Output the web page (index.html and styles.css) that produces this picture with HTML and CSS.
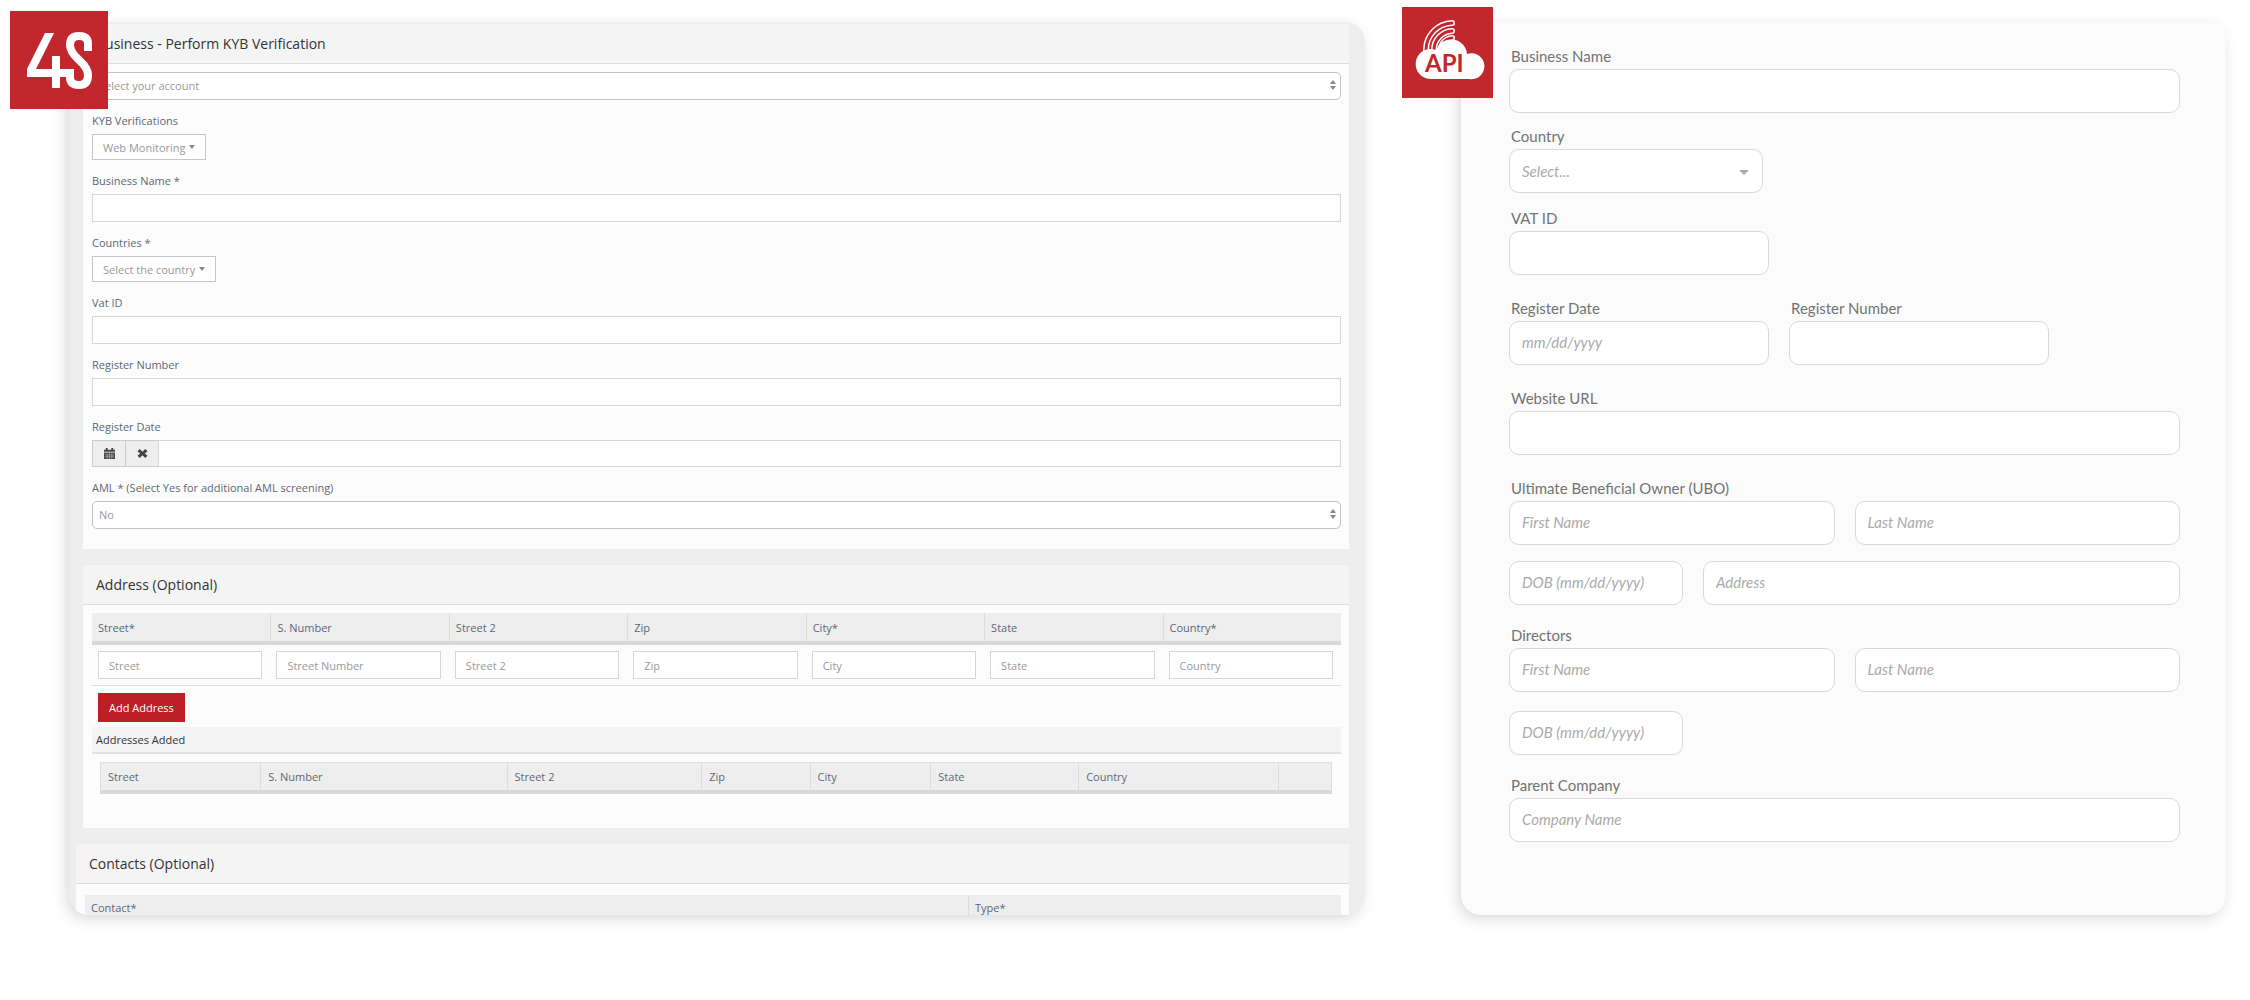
FILE: index.html
```html
<!DOCTYPE html>
<html lang="en">
<head>
<meta charset="utf-8">
<title>KYB Verification</title>
<link rel="stylesheet" href="styles.css">
</head>
<body>
<main class="page">
  <div class="card console-card">
    <div class="badge badge-4s">
      <svg viewBox="0 0 98 98" role="img" aria-label="4S">
        <path class="ink" d="M35 22H44L26 58H42V45H50V58H64V66H50V77H42V66H17V58Z"/>
        <path class="stroke" d="M78 40V33Q78 25 69 25Q60 25 60 34Q60 41 69 49Q78 57 78 64Q78 74 69 74Q60 74 60 66V60"/>
      </svg>
    </div>
    <form class="console">
      <section class="section">
        <h2 class="section-title">Business - Perform KYB Verification</h2>
        <div class="fields">
          <div class="select-box">
            <select aria-label="Account"><option>Select your account</option></select>
            <svg class="updown" viewBox="0 0 6 10"><path d="M3 0L6 4H0ZM3 10L6 6H0Z"/></svg>
          </div>
          <div class="field field-menu">
            <label for="kyb">KYB Verifications</label>
            <button type="button" id="kyb" class="menu-button">Web Monitoring <i class="caret"></i></button>
          </div>
          <div class="field">
            <label for="bname">Business Name *</label>
            <input type="text" id="bname">
          </div>
          <div class="field field-menu">
            <label for="countries">Countries *</label>
            <button type="button" id="countries" class="menu-button">Select the country <i class="caret"></i></button>
          </div>
          <div class="field">
            <label for="vat">Vat ID</label>
            <input type="text" id="vat">
          </div>
          <div class="field">
            <label for="regno">Register Number</label>
            <input type="text" id="regno">
          </div>
          <div class="field">
            <label for="regdate">Register Date</label>
            <div class="date-group">
              <button type="button" aria-label="Pick a date"><svg viewBox="0 0 12 12"><path d="M0 2H2V0H4V2H8V0H10V2H12V4H0Z"/><path d="M0 5H12V12H0Z"/><path class="grid-lines" d="M1 7.500H11M1 9.500H11M3.500 6V12M6 6V12M8.500 6V12"/></svg></button>
              <button type="button" aria-label="Clear date"><svg viewBox="0 0 12 12"><path d="M3 1L6 4L9 1L11.500 3.500L8.500 6L11.500 8.500L9 11L6 8L3 11L0.500 8.500L3.500 6L0.500 3.500Z"/></svg></button>
              <input type="text" id="regdate">
            </div>
          </div>
          <div class="field">
            <label for="aml">AML * (Select Yes for additional AML screening)</label>
            <div class="select-box">
              <select id="aml"><option>No</option></select>
              <svg class="updown" viewBox="0 0 6 10"><path d="M3 0L6 4H0ZM3 10L6 6H0Z"/></svg>
            </div>
          </div>
        </div>
      </section>

      <section class="section section-address">
        <h2 class="section-title">Address (Optional)</h2>
        <div class="section-body">
          <table class="table entry-table">
            <thead>
              <tr><th>Street*</th><th>S. Number</th><th>Street 2</th><th>Zip</th><th>City*</th><th>State</th><th>Country*</th></tr>
            </thead>
            <tbody>
              <tr>
                <td><input type="text" placeholder="Street" aria-label="Street"></td>
                <td><input type="text" placeholder="Street Number" aria-label="Street Number"></td>
                <td><input type="text" placeholder="Street 2" aria-label="Street 2"></td>
                <td><input type="text" placeholder="Zip" aria-label="Zip"></td>
                <td><input type="text" placeholder="City" aria-label="City"></td>
                <td><input type="text" placeholder="State" aria-label="State"></td>
                <td><input type="text" placeholder="Country" aria-label="Country"></td>
              </tr>
            </tbody>
          </table>
          <button type="button" class="add-button">Add Address</button>
          <h3 class="subtitle">Addresses Added</h3>
          <div class="added">
            <table class="table added-table">
              <colgroup><col class="c-street"><col class="c-number"><col class="c-street2"><col class="c-zip"><col class="c-city"><col class="c-state"><col class="c-country"><col></colgroup>
              <thead>
                <tr><th>Street</th><th>S. Number</th><th>Street 2</th><th>Zip</th><th>City</th><th>State</th><th>Country</th><th></th></tr>
              </thead>
            </table>
          </div>
        </div>
      </section>

      <section class="section section-contacts">
        <h2 class="section-title">Contacts (Optional)</h2>
        <div class="section-body contacts-body">
          <table class="table contacts-table">
            <colgroup><col class="c-contact"><col></colgroup>
            <thead><tr><th>Contact*</th><th>Type*</th></tr></thead>
          </table>
        </div>
      </section>
    </form>
  </div>

  <div class="card api-card">
    <div class="badge badge-api">
      <svg viewBox="0 0 91 91" role="img" aria-label="API cloud">
        <g class="waves">
          <path d="M24 44V43A27 27 0 0 1 50 16"/>
          <path d="M32 44V43A19 19 0 0 1 50 24"/>
          <path d="M39 44V43A12 12 0 0 1 50 31"/>
        </g>
        <g class="waves-inner">
          <path d="M24 44V43A27 27 0 0 1 50 16"/>
          <path d="M32 44V43A19 19 0 0 1 50 24"/>
          <path d="M39 44V43A12 12 0 0 1 50 31"/>
        </g>
        <path class="ink" d="M28 72A15 15 0 1 1 34 43A16 16 0 0 1 65 47A13 13 0 1 1 67 72Z"/>
        <text x="23" y="65">API</text>
      </svg>
    </div>
    <form class="api">
      <div class="row r1">
        <div class="group wide"><label for="a-name">Business Name</label><input type="text" id="a-name"></div>
      </div>
      <div class="row r2">
        <div class="group country"><label for="a-country">Country</label>
          <div class="api-select"><select id="a-country"><option>Select...</option></select><i class="caret"></i></div>
        </div>
      </div>
      <div class="row">
        <div class="group medium"><label for="a-vat">VAT ID</label><input type="text" id="a-vat"></div>
      </div>
      <div class="row">
        <div class="group medium"><label for="a-date">Register Date</label><input type="text" id="a-date" placeholder="mm/dd/yyyy"></div>
        <div class="group medium"><label for="a-no">Register Number</label><input type="text" id="a-no"></div>
      </div>
      <div class="row">
        <div class="group wide"><label for="a-url">Website URL</label><input type="text" id="a-url"></div>
      </div>
      <div class="row owner">
        <div class="group wide"><label for="a-ubo">Ultimate Beneficial Owner (UBO)</label><input type="text" id="a-ubo" placeholder="First Name"></div>
        <div class="group wide"><input type="text" placeholder="Last Name" aria-label="Owner last name"></div>
      </div>
      <div class="row person-end">
        <div class="group small"><input type="text" placeholder="DOB (mm/dd/yyyy)" aria-label="Owner date of birth"></div>
        <div class="group wide"><input type="text" placeholder="Address" aria-label="Owner address"></div>
      </div>
      <div class="row director">
        <div class="group wide"><label for="a-dir">Directors</label><input type="text" id="a-dir" placeholder="First Name"></div>
        <div class="group wide"><input type="text" placeholder="Last Name" aria-label="Director last name"></div>
      </div>
      <div class="row person-end">
        <div class="group small"><input type="text" placeholder="DOB (mm/dd/yyyy)" aria-label="Director date of birth"></div>
      </div>
      <div class="row">
        <div class="group wide"><label for="a-parent">Parent Company</label><input type="text" id="a-parent" placeholder="Company Name"></div>
      </div>
    </form>
  </div>
</main>
</body>
</html>
```
FILE: styles.css
```css
* { box-sizing: border-box; }

body {
  margin: 0;
  background: #fff;
  font-family: "Open Sans", "Noto Sans", sans-serif;
  font-size: 11px;
  color: #5d6875;
}

input, select, button { font: inherit; color: inherit; margin: 0; }

.page {
  display: grid;
  grid-template-columns: 1296fr 765fr;
  gap: 96px;
  padding: 22px 24px 84px 69px;
}

.card { position: relative; display: grid; }

.badge { position: absolute; background: #c1272d; z-index: 1; }
.badge svg { display: block; }
.badge-4s { left: -59px; top: -11px; width: 98px; height: 98px; }
.badge-api { left: -59px; top: -15px; width: 91px; height: 91px; }
.ink { fill: #fff; }
.stroke { fill: none; stroke: #fff; stroke-width: 8; }

/* Console form */
.console {
  overflow: hidden;
  padding: 2px 16px 0 14px;
  border-radius: 20px;
  background: #ededee;
  box-shadow: -3px 4px 14px rgba(0, 0, 0, .15);
}

.section { background: #fcfcfc; margin-bottom: 16px; }

.section-title {
  margin: 0;
  height: 40px;
  padding: 0 13px;
  border-bottom: 1px solid #dcdcdc;
  background: #f4f4f4;
  color: #333;
  font-size: 14px;
  font-weight: 400;
  line-height: 39px;
}

.fields {
  display: flex;
  flex-direction: column;
  padding: 8px 8px 20px 9px;
}

.field { display: flex; flex-direction: column; align-items: stretch; }
.field label { height: 34px; padding-top: 13px; line-height: 16px; }
.field-menu { align-items: flex-start; }

.console input {
  width: 100%;
  height: 28px;
  padding: 0 10px;
  border: 1px solid #d6d6d6;
  border-radius: 0;
  background: #fff;
  outline: 0;
}
.console input::placeholder { color: #999; opacity: 1; }

.select-box { display: flex; position: relative; }
.select-box select {
  appearance: none;
  width: 100%;
  height: 28px;
  padding: 0 6px 1px;
  border: 1px solid #c2c2c2;
  border-radius: 5px;
  background: #fff;
  color: #999;
}
.updown { position: absolute; right: 5px; top: 8px; width: 6px; height: 10px; fill: #888; }

.menu-button {
  display: flex;
  align-items: center;
  gap: 4px;
  height: 26px;
  padding: 0 10px;
  border: 1px solid #c6c6c6;
  background: #fff;
  color: #999;
}
.caret { border: 3px solid transparent; border-top: 4px solid #888; border-bottom: 0; }

.console .date-group { display: flex; height: 27px; }
.console .date-group input { height: 27px; }
.date-group button {
  display: flex;
  align-items: center;
  justify-content: center;
  flex: none;
  width: 33px;
  padding: 0;
  border: 1px solid #ccc;
  border-right: 0;
  background: #eee;
}
.date-group button svg { width: 11px; height: 11px; fill: #444; }
.grid-lines { stroke: #999; stroke-width: 1; fill: none; }

.section-body { padding: 8px 8px 0 9px; }
.section-address .section-body { padding-bottom: 34px; }

.table { width: 100%; border-collapse: separate; border-spacing: 0; table-layout: fixed; }
.table th {
  height: 32px;
  padding: 0 6px;
  border-left: 1px solid #ddd;
  border-bottom: 4px solid #d9d9d9;
  background: #eee;
  font-weight: 400;
  text-align: left;
}
.entry-table th:first-child, .contacts-table th:first-child { border-left: 0; }
.entry-table td { height: 41px; padding: 0 8px 0 6px; border-bottom: 1px solid #ddd; }

.add-button {
  display: block;
  height: 29px;
  margin: 7px 0 5px 6px;
  padding: 0 11px;
  border: 0;
  background: #be1e25;
  color: #fff;
}

.subtitle {
  margin: 0;
  padding: 0 4px;
  border-bottom: 2px solid #e2e2e2;
  background: #f4f4f4;
  color: #333;
  font-size: 11px;
  font-weight: 400;
  line-height: 25px;
}

.added { padding: 8px 9px 0 8px; }
.added-table th { padding: 0 7px; border-top: 1px solid #ddd; }
.added-table th:last-child { border-right: 1px solid #ddd; }

.c-street { width: 13%; }
.c-number { width: 20%; }
.c-street2 { width: 15.8%; }
.c-zip { width: 8.8%; }
.c-city { width: 9.8%; }
.c-state { width: 12%; }
.c-country { width: 16.2%; }
.c-contact { width: 70.3%; }

.section-contacts { margin: 0 0 0 -7px; }
.contacts-body { padding-top: 11px; }
.contacts-table th { height: 20px; padding-top: 5px; border-bottom: 0; line-height: 15px; }

/* API form */
.api {
  padding: 24px 46px 50px 48px;
  border-radius: 20px;
  background: #fbfbfb;
  box-shadow: -3px 4px 14px rgba(0, 0, 0, .15);
  font-family: Lato, "Open Sans", sans-serif;
  font-size: 15px;
  color: #737373;
}

.row { display: flex; align-items: flex-end; gap: 20px; margin-bottom: 23px; }
.r1 { margin-bottom: 13px; }
.r2 { margin-bottom: 15px; }
.owner { margin-bottom: 16px; }
.director { margin-bottom: 19px; }
.person-end { margin-bottom: 20px; }

.group { display: flex; flex-direction: column; }
.group label { padding: 0 2px 3px; line-height: 20px; }
.wide { flex: 1; }
.medium { width: 260px; }
.country { width: 254px; }
.small { width: 174px; }

.api input, .api select {
  width: 100%;
  height: 44px;
  padding: 0 12px 2px;
  border: 1px solid #d9d9d9;
  border-radius: 10px;
  background: #fff;
  outline: 0;
}
.api input::placeholder { color: #aaa; font-style: italic; opacity: 1; }
.api-select { display: flex; position: relative; }
.api select { appearance: none; padding-bottom: 0; color: #aaa; font-style: italic; }
.api-select .caret { position: absolute; right: 14px; top: 21px; border-width: 5px 5px 0; border-top-color: #aaa; }

.waves path { fill: none; stroke: #fff; stroke-width: 6; stroke-linecap: round; }
.waves-inner path { fill: none; stroke: #c1272d; stroke-width: 3; stroke-linecap: round; }
.badge text { fill: #c1272d; font: 700 24px Lato, sans-serif; }
```
